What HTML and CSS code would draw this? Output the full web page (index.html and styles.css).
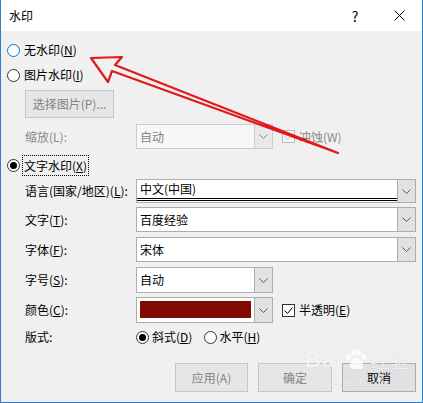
FILE: index.html
```html
<!DOCTYPE html>
<html lang="zh-CN">
<head>
<meta charset="utf-8">
<title>水印</title>
<link rel="stylesheet" href="styles.css">
</head>
<body>
<div class="dialog">
  <div class="titlebar">
    <span class="title">水印</span>
    <span class="help">?</span>
    <span class="close"><svg width="11" height="11" viewBox="0 0 11 11"><path d="M0.5 0.5 L10.5 10.5 M10.5 0.5 L0.5 10.5" stroke="#000" stroke-width="1" fill="none"/></svg></span>
  </div>

  <div class="radio-row r1"><span class="radio hover"></span><span>无水印(<u>N</u>)</span></div>
  <div class="radio-row r2"><span class="radio"></span><span>图片水印(<u>I</u>)</span></div>
  <div class="btn disabled pick">选择图片(P)...</div>

  <div class="row scale">
    <span class="label dis">缩放(L):</span>
    <div class="combo short disabled">
      <span class="val">自动</span>
      <span class="cbtn"><svg width="9" height="5" viewBox="0 0 9 5"><path d="M0.5 0.5 L4.5 4.5 L8.5 0.5" stroke="#8a8a8a" fill="none"/></svg></span>
    </div>
    <span class="check disabled"><svg width="11" height="11" viewBox="0 0 11 11"><path d="M1.5 5.5 L4.5 8.5 L9.5 2.5" stroke="#c4c4c4" fill="none"/></svg></span>
    <span class="dis">冲蚀(W)</span>
  </div>

  <div class="radio-row r3"><span class="radio checked"></span><span class="focus">文字水印(<u>X</u>)</span></div>

  <div class="row lang">
    <span class="label">语言(国家/地区)(<u>L</u>):</span>
    <div class="combo full">
      <span class="val langval"><span class="langtext">中文(中国)</span></span>
      <span class="cbtn"><svg width="9" height="5" viewBox="0 0 9 5"><path d="M0.5 0.5 L4.5 4.5 L8.5 0.5" stroke="#5a5a5a" fill="none"/></svg></span>
    </div>
  </div>

  <div class="row txt">
    <span class="label">文字(<u>T</u>):</span>
    <div class="combo full">
      <span class="val">百度经验</span>
      <span class="cbtn"><svg width="9" height="5" viewBox="0 0 9 5"><path d="M0.5 0.5 L4.5 4.5 L8.5 0.5" stroke="#5a5a5a" fill="none"/></svg></span>
    </div>
  </div>

  <div class="row fnt">
    <span class="label">字体(<u>F</u>):</span>
    <div class="combo full">
      <span class="val">宋体</span>
      <span class="cbtn"><svg width="9" height="5" viewBox="0 0 9 5"><path d="M0.5 0.5 L4.5 4.5 L8.5 0.5" stroke="#5a5a5a" fill="none"/></svg></span>
    </div>
  </div>

  <div class="row size">
    <span class="label">字号(<u>S</u>):</span>
    <div class="combo short">
      <span class="val">自动</span>
      <span class="cbtn"><svg width="9" height="5" viewBox="0 0 9 5"><path d="M0.5 0.5 L4.5 4.5 L8.5 0.5" stroke="#5a5a5a" fill="none"/></svg></span>
    </div>
  </div>

  <div class="row color">
    <span class="label">颜色(<u>C</u>):</span>
    <div class="combo short">
      <span class="val swatchval"><span class="swatch"></span></span>
      <span class="cbtn"><svg width="9" height="5" viewBox="0 0 9 5"><path d="M0.5 0.5 L4.5 4.5 L8.5 0.5" stroke="#5a5a5a" fill="none"/></svg></span>
    </div>
    <span class="check"><svg width="11" height="11" viewBox="0 0 11 11"><path d="M1.5 5.5 L4.5 8.5 L9.5 2.5" stroke="#000" fill="none"/></svg></span>
    <span>半透明(<u>E</u>)</span>
  </div>

  <div class="row layout">
    <span class="label">版式:</span>
    <span class="radio checked"></span><span class="opt">斜式(<u>D</u>)</span>
    <span class="radio second"></span><span class="opt">水平(<u>H</u>)</span>
  </div>

  <div class="buttons">
    <div class="btn disabled w73">应用(A)</div>
    <div class="btn disabled">确定</div>
    <div class="btn">取消</div>
  </div>

  <svg class="annot" width="423" height="403" viewBox="0 0 423 403">
    <polygon points="91,58 122,57 115,65 338,153 112,71 108,82" fill="none" stroke="#e01a1a" stroke-width="2.2" stroke-linejoin="round"/>
  </svg>

  <div class="wm">
    <div class="wm-top">
      <span class="wm-bai">Bai</span>
      <svg class="wm-paw" width="24" height="24" viewBox="0 0 24 24">
        <ellipse cx="5" cy="9" rx="2.5" ry="3" fill="#fff"/>
        <ellipse cx="10" cy="4.5" rx="2.5" ry="3" fill="#fff"/>
        <ellipse cx="15" cy="4.5" rx="2.5" ry="3" fill="#fff"/>
        <ellipse cx="20" cy="9" rx="2.5" ry="3" fill="#fff"/>
        <path d="M12.5 10 C8 10 5 16 6 19 C7 22 10 21 12.5 21 C15 21 18 22 19 19 C20 16 17 10 12.5 10 Z" fill="#fff"/>
      </svg>
      <span class="wm-jy">经验</span>
    </div>
    <div class="wm-url">jingyan.baidu.com</div>
  </div>
</div>
</body>
</html>
```

FILE: styles.css
```css
* { box-sizing: border-box; }

body {
  margin: 0;
  font-family: "Noto Sans CJK SC", "Microsoft YaHei", sans-serif;
  font-size: 12px;
  line-height: 16px;
  color: #000;
}

u {
  text-decoration: underline;
  text-underline-offset: 1px;
}

.dialog {
  position: relative;
  width: 423px;
  height: 403px;
  background: #f0f0f0;
  border: 1px solid #2f7fc8;
  border-top: none;
  overflow: hidden;
}

.titlebar {
  height: 31px;
  background: #fff;
  display: flex;
  align-items: center;
  padding-left: 8px;
}

.title { flex: 1; }

.help {
  width: 30px;
  text-align: center;
  font-size: 14px;
  margin-right: 6px;
}

.close {
  width: 46px;
  height: 31px;
  display: flex;
  align-items: center;
  justify-content: center;
}

/* radio buttons */
.radio-row {
  display: flex;
  align-items: center;
  height: 20px;
  padding-left: 6px;
  gap: 4px;
}

.r1 { margin-top: 9px; }
.r2 { margin-top: 5px; }
.r3 { margin-top: 6px; height: 21px; gap: 2px; }

.radio {
  width: 13px;
  height: 13px;
  flex: none;
  border: 1px solid #333;
  border-radius: 50%;
  background: #fff;
  position: relative;
}

.radio.hover { border-color: #0078d7; }

.radio.checked::after {
  content: "";
  position: absolute;
  left: 2px;
  top: 2px;
  width: 7px;
  height: 7px;
  border-radius: 50%;
  background: #000;
}

.focus {
  border: 1px dotted #000;
  padding: 1px 1px 1px 1px;
  height: 21px;
  display: flex;
  align-items: center;
}

/* buttons */
.btn {
  width: 74px;
  height: 29px;
  border: 1px solid #adadad;
  background: #e1e1e1;
  display: flex;
  align-items: center;
  justify-content: center;
}

.btn.disabled {
  border-color: #c6c6c6;
  background: #e6e6e6;
  color: #838383;
}

.btn.w73 { width: 73px; }

.pick {
  margin: 5px 0 0 24px;
  width: 89px;
  height: 28px;
}

/* form rows */
.row {
  display: flex;
  align-items: center;
  margin-left: 24px;
  margin-right: 6px;
}

.label { width: 111px; flex: none; }

.dis { color: #8a8a8a; }

.scale { margin-top: 6px; height: 25px; }
.lang  { margin-top: 3px; height: 24px; }
.txt   { margin-top: 4px; height: 25px; }
.fnt   { margin-top: 5px; height: 25px; }
.size  { margin-top: 5px; height: 26px; }
.color { margin-top: 4px; height: 26px; }
.layout { margin-top: 4px; height: 20px; }

.combo {
  height: 100%;
  display: flex;
  border: 1px solid #adadad;
  background: #fff;
}

.combo.full { flex: 1; }
.combo.short { width: 137px; flex: none; }

.combo .val {
  flex: 1;
  display: flex;
  align-items: center;
  padding-left: 3px;
}

.combo .cbtn {
  width: 18px;
  flex: none;
  background: #e1e1e1;
  border-left: 1px solid #adadad;
  display: flex;
  align-items: center;
  justify-content: center;
}

.combo.disabled {
  border-color: #cccccc;
  background: #f7f7f7;
}

.combo.disabled .val { color: #838383; }

.combo.disabled .cbtn {
  background: #e8e8e8;
  border-left-color: #cccccc;
}

.langval {
  flex-direction: column;
  align-items: stretch !important;
  padding: 0 0 1px 0 !important;
}

.langtext {
  flex: 1;
  padding-left: 3px;
  display: flex;
  align-items: center;
  border-bottom: 3px double #000;
}

.swatchval {
  padding: 3px 3px 4px 3px !important;
}

.swatch {
  flex: 1;
  height: 100%;
  background: #800a00;
}

.check {
  width: 13px;
  height: 13px;
  flex: none;
  border: 1px solid #333;
  background: #fff;
  margin-left: 9px;
  margin-right: 4px;
  display: flex;
  align-items: center;
  justify-content: center;
}

.check.disabled {
  border-color: #bcbcbc;
  background: #f7f7f7;
}

.layout .opt { margin-left: 3px; }
.layout .radio.second { margin-left: 12px; }
.layout .opt:last-child { margin-left: 2px; }

.buttons {
  display: flex;
  justify-content: flex-end;
  gap: 10px;
  margin-top: 16px;
  margin-right: 6px;
}

/* annotation overlay */
.annot {
  position: absolute;
  left: -1px;
  top: 0;
  pointer-events: none;
}

.wm {
  position: absolute;
  left: 304px;
  top: 346px;
  color: rgba(255, 255, 255, 0.8);
  pointer-events: none;
  text-shadow: 0 0 1px rgba(0, 0, 0, 0.15);
}

.wm-top {
  display: flex;
  align-items: center;
  height: 28px;
}

.wm-bai {
  font-family: "Liberation Sans", Arial, sans-serif;
  font-size: 22px;
  font-weight: bold;
  letter-spacing: 1px;
}

.wm-paw { opacity: 0.8; margin: 0 2px; }

.wm-jy { font-size: 19px; }

.wm-url {
  font-family: "Liberation Serif", serif;
  font-size: 11px;
  line-height: 12px;
  margin-top: 2px;
  padding-left: 2px;
}
```
